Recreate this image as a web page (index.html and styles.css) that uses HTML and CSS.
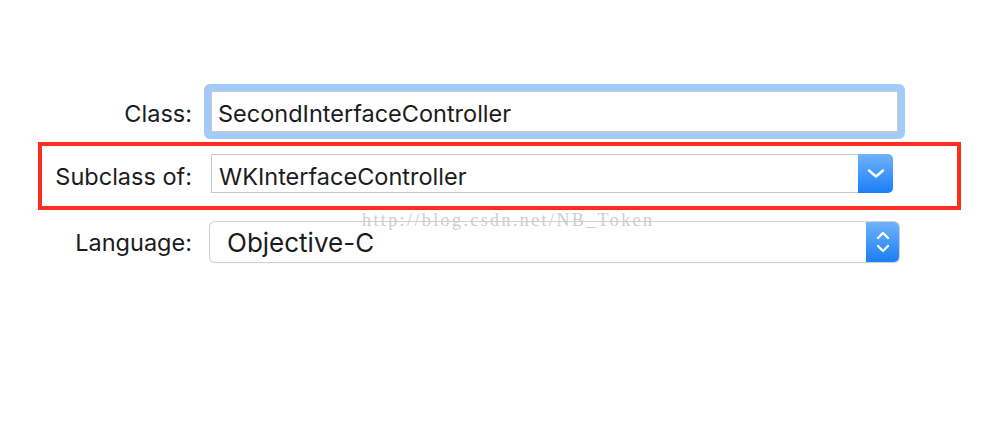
FILE: index.html
```html
<!DOCTYPE html>
<html>
<head>
<meta charset="utf-8">
<link rel="stylesheet" href="styles.css">
</head>
<body>
<div class="panel">
  <div class="row row-class">
    <div class="label label-class">Class:</div>
    <div class="ring"><div class="field">SecondInterfaceController</div></div>
  </div>
  <div class="row row-sub">
    <div class="label label-sub">Subclass of:</div>
    <div class="combo">
      <div class="combo-text">WKInterfaceController</div>
      <div class="btn btn-combo">
        <svg width="18" height="11" viewBox="0 0 18 11"><path d="M2 2.5 L9 8.5 L16 2.5" fill="none" stroke="#fff" stroke-width="2.5" stroke-linecap="round" stroke-linejoin="round"/></svg>
      </div>
    </div>
  </div>
  <div class="row row-lang">
    <div class="label">Language:</div>
    <div class="popup">
      <div class="popup-text">Objective-C</div>
      <div class="btn btn-popup">
        <svg width="14" height="26" viewBox="0 0 14 26"><path d="M2 9 L7 4 L12 9" fill="none" stroke="#fff" stroke-width="2.3" stroke-linecap="round" stroke-linejoin="round"/><path d="M2 17 L7 22 L12 17" fill="none" stroke="#fff" stroke-width="2.3" stroke-linecap="round" stroke-linejoin="round"/></svg>
      </div>
    </div>
  </div>
  <div class="watermark">http://blog.csdn.net/NB_Token</div>
</div>
</body>
</html>
```
FILE: styles.css
```css
html, body {
  margin: 0;
  padding: 0;
  background: #fff;
}
body {
  font-family: Inter, "Noto Sans", "Liberation Sans", sans-serif;
  color: #1b1b1b;
}
.panel {
  position: relative;
  width: 996px;
  height: 422px;
  padding-top: 84px;
  box-sizing: border-box;
}
.row {
  display: flex;
  align-items: center;
}
.label {
  width: 192px;
  text-align: right;
  font-size: 23.5px;
  flex: none;
}
.label-class {
  padding-top: 4px;
}
.row-class {
  gap: 12px;
}
.ring {
  width: 701px;
  height: 55px;
  box-sizing: border-box;
  padding: 7px;
  background: #a2ccf7;
  border-radius: 6px;
}
.field {
  height: 41px;
  box-sizing: border-box;
  border: 1px solid #c9c9c9;
  background: #fff;
  font-size: 23.5px;
  padding-left: 6px;
  padding-top: 4px;
  display: flex;
  align-items: center;
}
.row-sub {
  margin-top: 3px;
  margin-left: 38px;
  width: 923px;
  box-sizing: border-box;
  border: 4px solid #fd2c1d;
  padding: 8px 0 13px;
  gap: 19px;
}
.label-sub {
  width: 150px;
  padding-top: 6px;
}
.combo {
  width: 682px;
  height: 39px;
  display: flex;
  box-sizing: border-box;
}
.combo-text {
  flex: 1;
  border: 1px solid #c6c6c6;
  border-right: none;
  font-size: 23.5px;
  padding-left: 7px;
  padding-top: 6px;
  display: flex;
  align-items: center;
  background: #fff;
}
.btn {
  display: flex;
  align-items: center;
  justify-content: center;
  background: linear-gradient(#6fb3fa, #1a7ef6);
  border-radius: 0 5px 5px 0;
  flex: none;
}
.btn-combo {
  width: 35px;
}
.row-lang {
  margin-top: 12px;
  gap: 18px;
}
.popup {
  width: 689px;
  height: 40px;
  display: flex;
  border-radius: 5px;
  box-shadow: 0 0 0 1px #d0d0d0, 0 1px 1px rgba(0,0,0,0.25);
  background: #fff;
}
.popup-text {
  flex: 1;
  font-size: 26px;
  padding-left: 17px;
  display: flex;
  align-items: center;
}
.btn-popup {
  width: 33px;
}
.watermark {
  position: absolute;
  left: 362px;
  top: 210px;
  font-family: "Liberation Serif", serif;
  font-size: 18px;
  letter-spacing: 2.4px;
  color: #cdcdcd;
}
```
